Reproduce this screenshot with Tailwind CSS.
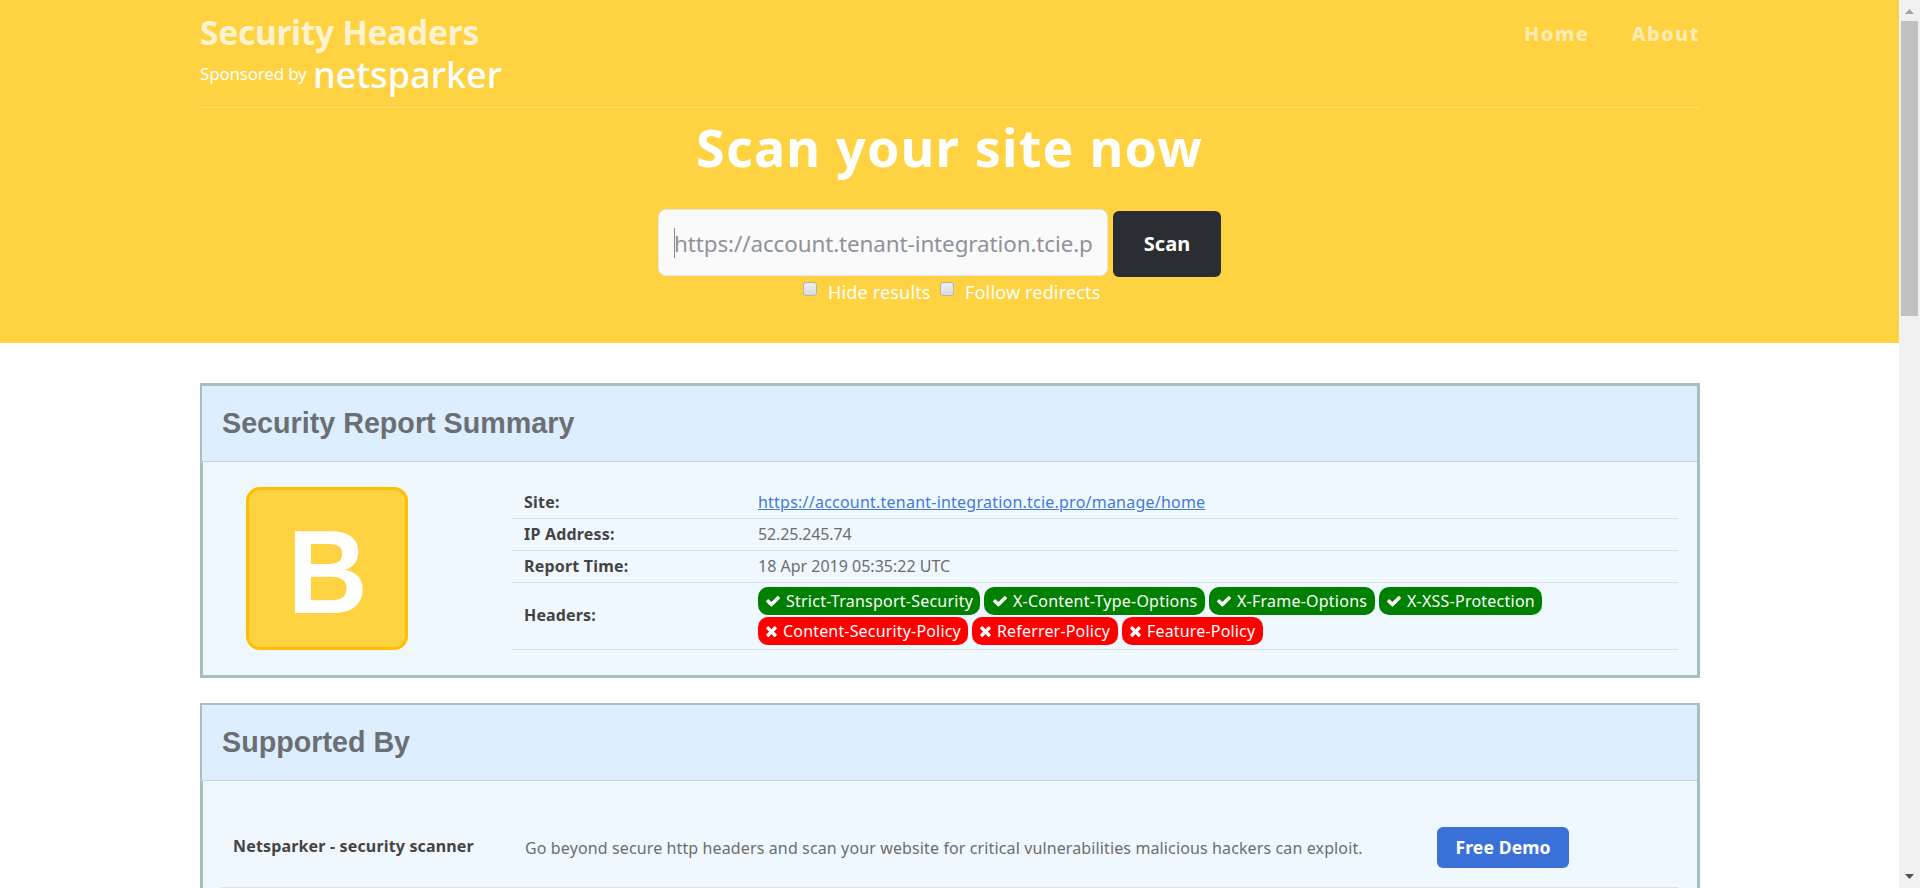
<!DOCTYPE html>
<html lang="en">
<head>
<meta charset="utf-8">
<title>Security Headers</title>
<script src="https://cdn.jsdelivr.net/npm/@tailwindcss/browser@4"></script>
</head>
<body class="bg-white overflow-hidden h-[888px] flex font-['Noto_Sans',sans-serif] text-base text-[#6b6e70]">
<svg class="hidden">
  <symbol id="check" viewBox="0 0 1792 1792"><path fill="currentColor" d="M1671 566q0 40-28 68l-724 724-136 136q-28 28-68 28t-68-28l-136-136-362-362q-28-28-28-68t28-68l136-136q28-28 68-28t68 28l294 295 656-657q28-28 68-28t68 28l136 136q28 28 28 68z"/></symbol>
  <symbol id="times" viewBox="0 0 1408 1792"><path fill="currentColor" d="M1298 1322q0 40-28 68l-136 136q-28 28-68 28t-68-28l-294-294-294 294q-28 28-68 28t-68-28l-136-136q-28-28-28-68t28-68l294-294-294-294q-28-28-28-68t28-68l136-136q28-28 68-28t68 28l294 294 294-294q28-28 68-28t68 28l136 136q28 28 28 68t-28 68l-294 294 294 294q28 28 28 68z"/></symbol>
</svg>
<div class="w-[1899px] shrink-0">
  <header class="h-[343px] bg-[#ffd242] text-white">
    <div class="w-[1500px] ml-[200px] h-[108px] border-b border-white/20 flex justify-between">
      <div class="pt-[9px]">
        <div class="text-[33.6px] leading-[46px] font-bold text-white/75 tracking-[-0.33px] whitespace-nowrap">Security Headers</div>
        <div class="flex items-start">
          <span class="text-[17px] leading-6 mt-[7px] w-[112px] tracking-[-0.2px] whitespace-nowrap">Sponsored by</span>
          <svg class="w-[192px] h-[46px] overflow-visible" viewBox="0 0 192 46"><text x="1" y="32.500" font-family="Noto Sans, sans-serif" font-size="37" font-weight="500" fill="#fff" textLength="189" lengthAdjust="spacingAndGlyphs">netsparker</text></svg>
        </div>
      </div>
      <nav class="flex gap-[42px] pt-[20px] text-[20px] leading-7 font-extrabold tracking-[1.4px] text-white/60"><a>Home</a><a>About</a></nav>
    </div>
    <h1 class="pt-[4px] text-center text-[52px] leading-[70px] font-bold tracking-[1.2px]">Scan your site now</h1>
    <div class="flex ml-[658px] mt-[27px] gap-[5px]">
      <div class="w-[450px] h-[67px] rounded-lg border border-[#e6e6ea] bg-[#fafafa] flex items-center pl-[15px] text-[22.4px] tracking-[-0.09px] text-[#8e929b] whitespace-nowrap"><span class="w-px h-[30px] bg-[#888c96]"></span><span class="mt-[3px] -ml-px">https://account.tenant-integration.tcie.p</span></div>
      <button class="mt-[2px] w-[108px] h-[66px] rounded-md bg-[#2a2d32] text-[20px] font-bold">Scan</button>
    </div>
    <div class="flex ml-[803px] mt-[2px] text-[18px] tracking-[0.17px] leading-[26px] whitespace-nowrap">
      <span class="mt-[3px] size-[14px] rounded-[3px] border border-[#b3b3b3] bg-linear-to-b from-[#eeeeee] to-[#dcdcdc]"></span><span class="ml-[11px] w-[112px]">Hide results</span>
      <span class="mt-[3px] size-[14px] rounded-[3px] border border-[#b3b3b3] bg-linear-to-b from-[#eeeeee] to-[#dcdcdc]"></span><span class="ml-[11px]">Follow redirects</span>
    </div>
  </header>

  <main class="w-[1500px] ml-[200px] pt-10">
    <section class="h-[295px] border-t-[3px] border-b-[3px] border-r-[3px] border-[#a8bfc1] bg-[#f0f8ff]">
      <h2 class="h-[76px] border-l-2 border-b border-l-[#a8bfc1] border-b-[#c6d0d5] bg-[#ddeeff] pl-5 pt-[19px] font-['Liberation_Sans',sans-serif] font-bold text-[28.7px] leading-[36px] text-[#6b6e72]">Security Report Summary</h2>
      <div class="h-[213px] border-l-[3px] border-[#a8bfc1] flex">
        <div class="ml-[43px] mt-[25px] w-[162px] h-[163px] rounded-[14px] border-[3px] border-[#ffbf00] bg-[#ffd242] text-white font-['Liberation_Sans',sans-serif] font-bold text-[118px] leading-[164px] text-center pl-[2px]"><span class="inline-block scale-x-[0.94]">B</span></div>
        <div class="ml-[104px] mt-[25px] w-[1166px]">
          <div class="h-8 flex border-b border-[#dee0e2] pl-3 leading-[31px]"><b class="w-[234px] text-[#444] tracking-[0.2px]">Site:</b><a class="text-[#4479d8] underline tracking-[0.225px]">https://account.tenant-integration.tcie.pro/manage/home</a></div>
          <div class="h-8 flex border-b border-[#dee0e2] pl-3 leading-[31px]"><b class="w-[234px] text-[#444] tracking-[0.2px]">IP Address:</b><span class="tracking-[-0.15px]">52.25.245.74</span></div>
          <div class="h-8 flex border-b border-[#dee0e2] pl-3 leading-[31px]"><b class="w-[234px] text-[#444] tracking-[0.2px]">Report Time:</b><span>18 Apr 2019 05:35:22 UTC</span></div>
          <div class="h-[67px] flex border-b border-[#dee0e2] pl-3"><b class="w-[234px] text-[#444] leading-[65px] tracking-[0.15px]">Headers:</b>
            <div class="flex flex-col gap-[2px] pt-1 text-white leading-7 whitespace-nowrap">
              <div class="flex gap-1 h-7 tracking-[0.23px]">
                <span class="w-[222px] bg-[#008000] rounded-[10px] flex items-center pl-[7px]"><svg class="size-4 mr-[5px]"><use href="#check"/></svg>Strict-Transport-Security</span>
                <span class="w-[221px] bg-[#008000] rounded-[10px] flex items-center pl-2"><svg class="size-4 mr-[5px]"><use href="#check"/></svg>X-Content-Type-Options</span>
                <span class="w-[166px] bg-[#008000] rounded-[10px] flex items-center pl-[7px]"><svg class="size-4 mr-[5px]"><use href="#check"/></svg>X-Frame-Options</span>
                <span class="w-[163px] bg-[#008000] rounded-[10px] flex items-center pl-[7px]"><svg class="size-4 mr-[5px]"><use href="#check"/></svg>X-XSS-Protection</span>
              </div>
              <div class="flex gap-1 h-7 tracking-[0.17px]">
                <span class="w-[210px] bg-[#f00] rounded-[10px] flex items-center pl-[7px]"><svg class="w-[13px] h-4 mr-[5px]"><use href="#times"/></svg>Content-Security-Policy</span>
                <span class="w-[146px] bg-[#f00] rounded-[10px] flex items-center pl-[7px]"><svg class="w-[13px] h-4 mr-[5px]"><use href="#times"/></svg>Referrer-Policy</span>
                <span class="w-[141px] bg-[#f00] rounded-[10px] flex items-center pl-[7px]"><svg class="w-[13px] h-4 mr-[5px]"><use href="#times"/></svg>Feature-Policy</span>
              </div>
            </div>
          </div>
        </div>
      </div>
    </section>

    <section class="mt-[25px] h-[185px] border-t-2 border-r-[3px] border-[#a8bfc1] bg-[#f0f8ff]">
      <h2 class="h-[76px] border-l-2 border-b border-l-[#a8bfc1] border-b-[#c6d0d5] bg-[#ddeeff] pl-5 pt-[19px] font-['Liberation_Sans',sans-serif] font-bold text-[28.7px] leading-[36px] text-[#6b6e72]">Supported By</h2>
      <div class="h-[107px] border-l-[3px] border-[#a8bfc1]">
        <div class="ml-[18px] w-[1457px] h-[107px] border-b border-[#dee0e2] flex pl-3 whitespace-nowrap">
          <b class="mt-[53px] w-[292px] text-[#444] tracking-[0.16px]">Netsparker - security scanner</b>
          <span class="mt-[55px] w-[912px] tracking-[0.122px]">Go beyond secure http headers and scan your website for critical vulnerabilities malicious hackers can exploit.</span>
          <a class="mt-[46px] w-[132px] h-[41px] rounded-md bg-[#3a71d9] text-white font-bold text-[17.6px] leading-[41px] tracking-[0.1px] text-center">Free Demo</a>
        </div>
      </div>
    </section>
  </main>
</div>
<aside class="w-[21px] h-[888px] bg-[#f1f1f1] flex flex-col items-center justify-between shrink-0">
  <div class="flex flex-col items-center">
    <svg class="w-[9px] h-[5px] mt-[9px] mb-[7px]" viewBox="0 0 9 5"><path fill="#a3a3a3" d="M0 5h9L4.500 0z"/></svg>
    <div class="w-[17px] h-[295px] bg-[#c1c1c1]"></div>
  </div>
  <svg class="w-[9px] h-[5px] mb-[9px]" viewBox="0 0 9 5"><path fill="#505050" d="M0 0h9L4.500 5z"/></svg>
</aside>
</body>
</html>
